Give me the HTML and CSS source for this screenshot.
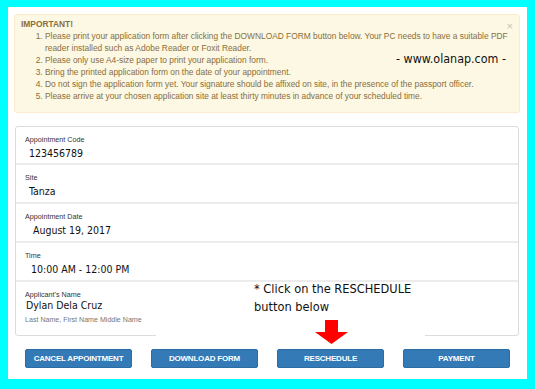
FILE: index.html
```html
<!DOCTYPE html>
<html>
<head>
<meta charset="utf-8">
<link rel="stylesheet" href="styles.css">
</head>
<body>
<div class="page">
  <div class="alert">
    <span class="close">×</span>
    <div class="alert-title">IMPORTANT!</div>
    <ol class="alert-list">
      <li>Please print your application form after clicking the DOWNLOAD FORM button below. Your PC needs to have a suitable PDF reader installed such as Adobe Reader or Foxit Reader.</li>
      <li>Please only use A4-size paper to print your application form.</li>
      <li>Bring the printed application form on the date of your appointment.</li>
      <li>Do not sign the application form yet. Your signature should be affixed on site, in the presence of the passport officer.</li>
      <li>Please arrive at your chosen application site at least thirty minutes in advance of your scheduled time.</li>
    </ol>
  </div>

  <div class="panel">
    <div class="row">
      <div class="label">Appointment Code</div>
      <div class="value v-code">123456789</div>
    </div>
    <div class="row">
      <div class="label">Site</div>
      <div class="value v-site">Tanza</div>
    </div>
    <div class="row">
      <div class="label">Appointment Date</div>
      <div class="value v-date">August 19, 2017</div>
    </div>
    <div class="row">
      <div class="label">Time</div>
      <div class="value v-time">10:00 AM - 12:00 PM</div>
    </div>
    <div class="row row-last">
      <div class="label">Applicant's Name</div>
      <div class="value v-name">Dylan Dela Cruz</div>
      <div class="hint">Last Name, First Name Middle Name</div>
    </div>
  </div>

  <div class="actions">
    <button class="btn">CANCEL APPOINTMENT</button>
    <button class="btn">DOWNLOAD FORM</button>
    <button class="btn">RESCHEDULE</button>
    <button class="btn">PAYMENT</button>
  </div>
</div>

<div class="watermark">- www.olanap.com -</div>
<div class="cover"></div>
<div class="note">* Click on the RESCHEDULE<br>button below</div>
<svg class="arrow" width="33" height="24" viewBox="0 0 33 24">
  <polygon points="10,0 23,0 23,12 33,12 16.5,24 0,12 10,12" fill="#ff0000"/>
</svg>
</body>
</html>
```

FILE: styles.css
```css
html, body {
  margin: 0;
  padding: 0;
}
body {
  background: #00ffff;
  padding: 7px 8px 10px 8px;
  width: 535px;
  height: 389px;
  box-sizing: border-box;
  position: relative;
  font-family: "Liberation Sans", Arial, sans-serif;
}
.page {
  background: #ffffff;
  height: 372px;
  padding: 7px 7px 0 6px;
  box-sizing: border-box;
}
.alert {
  position: relative;
  background: #fcf8e3;
  border: 1px solid #faebcc;
  border-radius: 3px;
  color: #8a6d3b;
  font-size: 8.4px;
  line-height: 12px;
  padding: 4px 6px 10px 6px;
  height: 99px;
  box-sizing: border-box;
}
.alert-title {
  font-weight: bold;
  line-height: 11px;
}
.alert-list {
  margin: 0;
  padding-left: 24px;
}
.alert-list li {
  width: fit-content;
}
.close {
  position: absolute;
  right: 6px;
  top: 5px;
  color: #c8c2ad;
  font-size: 11px;
  line-height: 12px;
}
.panel {
  margin: 13px 1px 0 1px;
  border: 1px solid #dcdcdc;
  border-radius: 3px;
}
.row {
  padding: 8px 9px 4px 9px;
  border-bottom: 2px solid #ececec;
  height: 39px;
  box-sizing: border-box;
}
.row:first-child {
  height: 38px;
}
.row-last {
  border-bottom: none;
  height: 53px;
  padding-bottom: 0;
}
.label {
  font-size: 7.2px;
  line-height: 9px;
  color: #333333;
}
.value {
  font-family: "DejaVu Sans Condensed", "DejaVu Sans", sans-serif;
  font-stretch: condensed;
  font-size: 10.5px;
  line-height: 14px;
  margin-top: 2px;
  color: #111111;
}
.v-code, .v-site { padding-left: 4px; }
.v-date { padding-left: 8px; }
.v-time { padding-left: 6px; }
.v-name { padding-left: 1px; margin-top: -1px; }
.hint {
  font-size: 7.1px;
  line-height: 9px;
  color: #777777;
  margin-top: 4px;
}
.actions {
  display: grid;
  grid-template-columns: repeat(4, 107px);
  column-gap: 19px;
  margin: 13px 0 0 11px;
}
.btn {
  height: 19px;
  background: #337ab7;
  border: 1px solid #2e6da4;
  border-radius: 2px;
  color: #ffffff;
  font-family: "Liberation Sans", Arial, sans-serif;
  font-weight: bold;
  font-size: 8px;
  letter-spacing: -0.2px;
  padding: 0;
}
.watermark {
  position: absolute;
  left: 396px;
  top: 55px;
  font-family: "DejaVu Sans Condensed", "DejaVu Sans", sans-serif;
  font-stretch: condensed;
  font-size: 12.4px;
  line-height: 8px;
  color: #111111;
}
.cover {
  position: absolute;
  left: 156px;
  top: 330px;
  width: 269px;
  height: 9px;
  background: #ffffff;
}
.note {
  position: absolute;
  left: 254px;
  top: 280px;
  font-family: "DejaVu Sans Condensed", "DejaVu Sans", sans-serif;
  font-stretch: condensed;
  font-size: 12.7px;
  line-height: 18px;
  color: #111111;
}
.arrow {
  position: absolute;
  left: 315px;
  top: 320px;
}
```
